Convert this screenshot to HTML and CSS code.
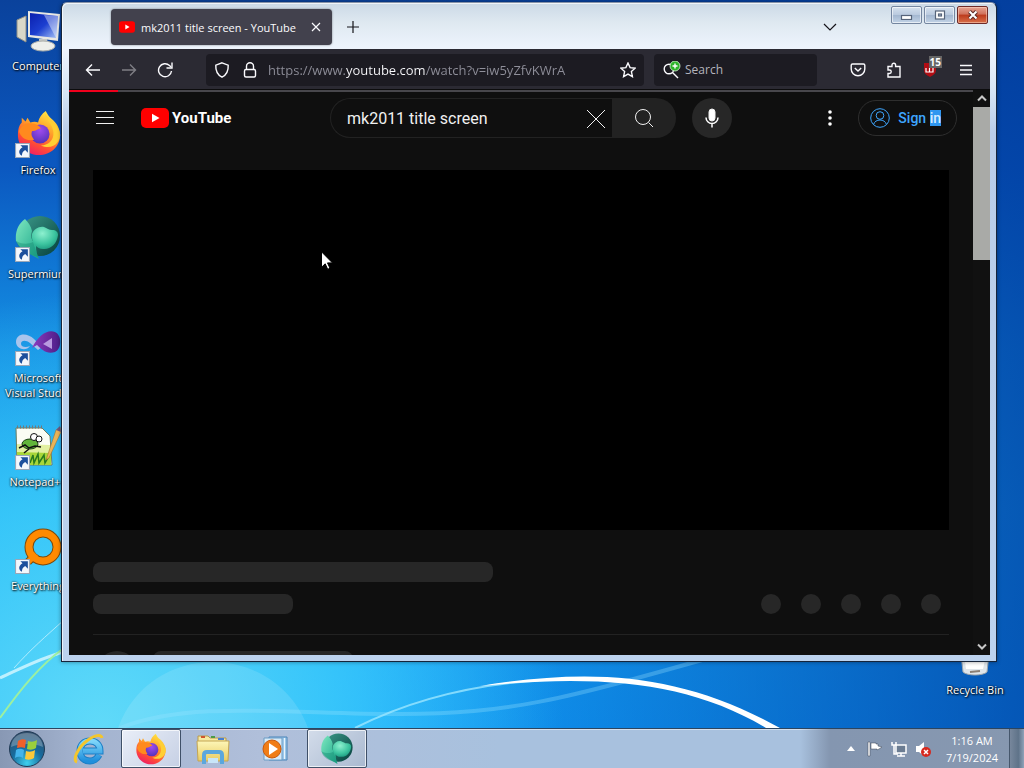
FILE: index.html
```
<!DOCTYPE html>
<html lang="en">
<head>
    <meta charset="UTF-8">
    <meta name="viewport" content="width=device-width, initial-scale=1.0">
    <title>mk2011 title screen - YouTube</title>
    <link rel="stylesheet" href="styles.css">
</head>
<body>
    <!-- Shared icons -->
    <svg class="defs" width="0" height="0" aria-hidden="true">
        <defs>
            <linearGradient id="ffBody" x1="0.8" y1="0" x2="0.3" y2="1">
                <stop offset="0" stop-color="#fff04a"/>
                <stop offset="0.4" stop-color="#ffa22a"/>
                <stop offset="0.75" stop-color="#ff4b36"/>
                <stop offset="1" stop-color="#ee1d67"/>
            </linearGradient>
            <radialGradient id="ffCore" cx="0.5" cy="0.3" r="0.8">
                <stop offset="0" stop-color="#a04bf0"/>
                <stop offset="1" stop-color="#4a2fb0"/>
            </radialGradient>
            <linearGradient id="smLight" x1="0" y1="0" x2="1" y2="1">
                <stop offset="0" stop-color="#7fe8c0"/>
                <stop offset="1" stop-color="#18a488"/>
            </linearGradient>
            <linearGradient id="smDark" x1="0" y1="0" x2="1" y2="1">
                <stop offset="0" stop-color="#3c9a8a"/>
                <stop offset="1" stop-color="#053f3c"/>
            </linearGradient>
            <radialGradient id="smBall" cx="0.4" cy="0.3" r="0.8">
                <stop offset="0" stop-color="#8df0cf"/>
                <stop offset="0.6" stop-color="#3cc49f"/>
                <stop offset="1" stop-color="#17917a"/>
            </radialGradient>
            <radialGradient id="orb" cx="0.5" cy="0.9" r="0.9">
                <stop offset="0" stop-color="#3fd0ee"/>
                <stop offset="0.5" stop-color="#176a9c"/>
                <stop offset="1" stop-color="#35506c"/>
            </radialGradient>
            <linearGradient id="screen" x1="0" y1="0" x2="1" y2="1">
                <stop offset="0" stop-color="#0a1fae"/>
                <stop offset="0.5" stop-color="#1c3fd0"/>
                <stop offset="1" stop-color="#a9c6f8"/>
            </linearGradient>
            <linearGradient id="folder" x1="0" y1="0" x2="0" y2="1">
                <stop offset="0" stop-color="#fdf6b8"/>
                <stop offset="1" stop-color="#e9cc62"/>
            </linearGradient>
            <linearGradient id="ie" x1="0" y1="0" x2="0" y2="1">
                <stop offset="0" stop-color="#7fd6fa"/>
                <stop offset="1" stop-color="#1f8fdc"/>
            </linearGradient>
            <linearGradient id="vs" x1="0" y1="0" x2="1" y2="0">
                <stop offset="0" stop-color="#8c3cc0"/>
                <stop offset="1" stop-color="#4b1d86"/>
            </linearGradient>
        </defs>
        <symbol id="firefox" viewBox="0 0 48 48">
            <path fill="url(#ffBody)" d="M31 1c2 3 3 6 6 8 5 4 9 10 9 17 0 12-10 21-22 21S2 38 2 26c0-6 1-10 4-13V8l4 4 2-4 3 5c3-1 6-1 8 0 1-5 4-9 8-12z"/>
            <circle cx="25" cy="25" r="10" fill="url(#ffCore)"/>
            <path fill="#ff8a1e" d="M3 22c3-7 8-9 13-8 4 0 8 2 10 5-4 1-5 3-9 3-2 3 0 7 2 9-8 2-14-2-16-9z"/>
            <path fill="#ffcf33" d="M30 3c1 8 8 10 9 20 1 9-6 14-13 14 13 6 21-5 20-12 0-9-13-14-16-22z"/>
        </symbol>
        <symbol id="supermium" viewBox="0 0 48 48">
            <circle cx="26" cy="22" r="20" fill="url(#smDark)"/>
            <path fill="url(#smLight)" d="M11 5C4 10 1 18 2 27c3 6 7 9 12 12l11 6c-3-6-3-11-3-15-6-4-5-10-4-13-1-5-4-9-7-12z"/>
            <path fill="#12886f" opacity="0.4" d="M2 27c7 4 13 3 17 1l5 15C12 40 4 36 2 27z"/>
            <path fill="url(#smBall)" d="M18 20c2-5 7-8 12-7 3 1 5 3 8 3 4 0 6 2 6 5-1 9-8 15-15 14-7 0-12-7-11-15z"/>
        </symbol>
        <symbol id="shortcut" viewBox="0 0 14 14">
            <path fill="#f4f7fc" stroke="#9aa7b8" d="M.5.5h13v13H.5z"/>
            <path fill="#1c4f9c" d="M5 2h7v7L9.500 6.500C7 8 6.500 9.500 6.500 12 3 10 3 6.500 7 4z"/>
        </symbol>
        <symbol id="yt" viewBox="0 0 28 20">
            <rect width="28" height="20" rx="5" fill="#f00"/>
            <path fill="#fff" d="M11 5.700v8.600l7.500-4.300z"/>
        </symbol>
    </svg>

    <main class="desktop">
        <svg class="wallpaper" viewBox="0 0 1024 728" preserveAspectRatio="none" fill="none" aria-hidden="true">
            <path d="M118 728C150 640 275 640 308 728z" fill="#fff" opacity="0.12"/>
            <path d="M120 728C190 700 290 714 400 714S560 700 720 655" stroke="#9be6ff" stroke-width="4" opacity="0.3"/>
            <path d="M355 728C420 695 500 678 590 679" stroke="#9be6ff" stroke-width="2" opacity="0.8"/>
            <path d="M480 686C590 668 680 672 780 728h-14C690 682 600 674 480 686z" fill="#fff"/>
            <path d="M0 678C20 669 40 658 64 652" stroke="#d8f7ff" stroke-width="3" opacity="0.8"/>
            <path d="M0 718C20 690 40 665 64 648" stroke="#9cf0a0" stroke-width="2"/>
            <path d="M14 668C30 650 46 636 64 620" stroke="#d8f7ff" stroke-width="1" opacity="0.7"/>
        </svg>

        <ul class="shortcuts">
            <li>
                <a href="#">
                    <svg class="icon" viewBox="0 0 48 48">
                        <path fill="#d9d8c8" stroke="#8f9088" d="M3 14l9-4v26l-9-5z"/>
                        <path fill="#e8e8e4" d="M14 5l32 3-2 27-30-4z"/>
                        <path fill="url(#screen)" d="M16 7l28 3-2 22-26-3z"/>
                        <path fill="#fff" opacity="0.4" d="M30 9l14 1-2 22z"/>
                        <path fill="#c6c9c6" d="M25 33h8l1 5h-9z"/>
                        <ellipse cx="29" cy="40" rx="12" ry="5" fill="#edefeb" stroke="#a9aca8"/>
                    </svg>
                    <span>Computer</span>
                </a>
            </li>
            <li>
                <a href="#">
                    <svg class="icon" viewBox="0 0 48 48">
                        <use href="#firefox" x="2" width="46" height="46"/>
                        <use href="#shortcut" x="1" y="33" width="15" height="15"/>
                    </svg>
                    <span>Firefox</span>
                </a>
            </li>
            <li>
                <a href="#">
                    <svg class="icon" viewBox="0 0 48 48">
                        <use href="#supermium" width="48" height="48"/>
                        <use href="#shortcut" x="1" y="33" width="15" height="15"/>
                    </svg>
                    <span>Supermium</span>
                </a>
            </li>
            <li>
                <a href="#">
                    <svg class="icon" viewBox="0 0 48 48">
                        <path fill="#a9c4ec" d="M2 24c0-9 11-10 18-3l8 8-4 3-8-7c-4-3-9-3-9 1 0 3 5 4 9 2-4 6-14 3-14-4z"/>
                        <path fill="url(#vs)" d="M18 30C24 18 33 11 41 14c7 3 7 17 0 20-8 3-14-3-18-7z"/>
                        <path fill="#b99ae0" d="M29 26l9-6v11z"/>
                        <use href="#shortcut" x="1" y="33" width="15" height="15"/>
                    </svg>
                    <span>Microsoft Visual Studio</span>
                </a>
            </li>
            <li>
                <a href="#">
                    <svg class="icon" viewBox="0 0 48 48">
                        <path fill="#fbfdf4" stroke="#6c7c60" d="M2 6h26l8 8 2 29H3z"/>
                        <path stroke="#777" stroke-dasharray="1 2" stroke-width="3" d="M3 5h26"/>
                        <path fill="#e2f0a0" d="M3 22l33 1v8H3z"/>
                        <path fill="#a8d639" d="M3 30l34 1v12H3z"/>
                        <path stroke="#27791e" stroke-width="1.500" fill="none" d="M16 41l3-8 1 8 4-9 1 9 5-8 1 8 4-7"/>
                        <ellipse cx="16" cy="22" rx="8" ry="5" fill="#62b53a" stroke="#173d11"/>
                        <circle cx="20" cy="15" r="3.500" fill="#fff" stroke="#111"/>
                        <circle cx="25" cy="17" r="3" fill="#fff" stroke="#111"/>
                        <path stroke="#111" stroke-width="1.500" fill="none" d="M5 26l6-3 4 3 6-2 6 1M10 31l5-4"/>
                        <path fill="#e9b458" stroke="#9a6a26" stroke-width="0.500" d="M32 38l10-30 4-3 1 5-12 26z"/>
                        <path fill="#6b5a86" d="M42 8l4-4 1 6z"/>
                        <use href="#shortcut" x="1" y="33" width="15" height="15"/>
                    </svg>
                    <span>Notepad++</span>
                </a>
            </li>
            <li>
                <a href="#">
                    <svg class="icon" viewBox="0 0 48 48">
                        <path stroke="#7c4a0c" stroke-width="8" d="M14 36l8-8"/>
                        <circle cx="29" cy="21" r="14" fill="none" stroke="#7c4a0c" stroke-width="9"/>
                        <path stroke="#ff8a00" stroke-width="6" d="M14 36l8-8"/>
                        <circle cx="29" cy="21" r="14" fill="none" stroke="#ff8a00" stroke-width="7"/>
                        <use href="#shortcut" x="1" y="33" width="15" height="15"/>
                    </svg>
                    <span>Everything</span>
                </a>
            </li>
        </ul>

        <a class="recycle" href="#">
            <svg class="icon" viewBox="0 0 48 48">
                <path fill="#dfe5ea" stroke="#9aa4ad" d="M8 6h32l-4 36c-4 4-20 4-24 0z"/>
                <path fill="#fff" d="M14 32l20-2-2 9H15z"/>
                <path stroke="#8b7f74" stroke-width="2" d="M19 42l10-1"/>
            </svg>
            <span>Recycle Bin</span>
        </a>

        <section class="window">
            <header class="titlebar">
                <div class="tab">
                    <svg width="16" height="12"><use href="#yt"/></svg>
                    <span class="tab-title">mk2011 title screen - YouTube</span>
                    <button class="tab-close" aria-label="Close tab">
                        <svg width="10" height="10" viewBox="0 0 10 10"><path d="M1 1l8 8M9 1L1 9"/></svg>
                    </button>
                </div>
                <button class="strip-btn" aria-label="New tab">
                    <svg width="14" height="14" viewBox="0 0 14 14"><path d="M7 1v12M1 7h12"/></svg>
                </button>
                <button class="strip-btn list-tabs" aria-label="List all tabs">
                    <svg width="14" height="14" viewBox="0 0 14 14"><path d="M1 4l6 6 6-6"/></svg>
                </button>
                <div class="controls">
                    <button aria-label="Minimize">
                        <svg width="14" height="10" viewBox="0 0 14 10"><rect x="1.500" y="5.500" width="10" height="4" fill="#fff" stroke="#56647a"/></svg>
                    </button>
                    <button aria-label="Maximize">
                        <svg width="14" height="10" viewBox="0 0 14 10"><rect x="2.500" y="1" width="9" height="8" fill="#fff" stroke="#56647a"/><rect x="5.500" y="4" width="3" height="2" fill="#a9bbd0" stroke="#56647a"/></svg>
                    </button>
                    <button class="close" aria-label="Close">
                        <svg width="14" height="10" viewBox="0 0 14 10"><path d="M3.500 1.500l7 7M10.500 1.500l-7 7" stroke="#5b2a26" stroke-width="4"/><path d="M3.500 1.500l7 7M10.500 1.500l-7 7" stroke="#fff" stroke-width="2"/></svg>
                    </button>
                </div>
            </header>

            <div class="toolbar">
                <div class="nav-group">
                    <button aria-label="Back"><svg viewBox="0 0 16 16"><path d="M15 8H2M7 2.500L1.500 8 7 13.500"/></svg></button>
                    <button disabled aria-label="Forward"><svg viewBox="0 0 16 16"><path d="M1 8h13M9 2.500L14.500 8 9 13.500"/></svg></button>
                    <button aria-label="Reload"><svg viewBox="0 0 16 16"><path d="M14.500 9A6.500 6.500 0 1 1 12.500 3.500L14 5"/><path d="M15 .5V6H9.500"/></svg></button>
                </div>
                <div class="urlbar">
                    <svg viewBox="0 0 16 16"><path d="M8 .8l6.200 2.400c.3 5.500-1.700 9.600-6.200 12-4.500-2.400-6.500-6.500-6.200-12z"/></svg>
                    <svg viewBox="0 0 16 16"><rect x="2.500" y="7.500" width="11" height="7.500" rx="1.500"/><path d="M4.500 7.500V4.300a3.500 3.500 0 0 1 7 0v3.200"/></svg>
                    <input class="url" type="text" aria-label="Address" value="https://www.youtube.com/watch?v=iw5yZfvKWrA">
                    <button aria-label="Bookmark this page"><svg viewBox="0 0 16 16"><path d="M8 1l2.100 4.600 5 .6-3.700 3.400 1 5L8 12.100l-4.400 2.500 1-5L.9 6.200l5-.6z"/></svg></button>
                </div>
                <div class="searchbar">
                    <svg viewBox="0 0 18 18"><circle cx="6" cy="8" r="4.800"/><path d="M9.500 11.500L15 17"/><circle cx="12" cy="5" r="5" fill="#2fb52a" stroke="#d9f5d6" stroke-width="0.800"/><path d="M12 2.500v5M9.500 5h5" stroke="#fff"/></svg>
                    <input type="text" placeholder="Search" aria-label="Search">
                </div>
                <div class="nav-group">
                    <button aria-label="Pocket"><svg viewBox="0 0 16 16"><path d="M2.500 2h11c.8 0 1.300.5 1.300 1.300V7a6.800 6.800 0 0 1-13.600 0V3.300C1.200 2.500 1.700 2 2.500 2z"/><path d="M4.800 6L8 9l3.200-3"/></svg></button>
                    <button aria-label="Extensions"><svg viewBox="0 0 16 16"><path d="M2 15v-3.500h1.500a1.700 1.700 0 0 0 0-3.500H2V4.500h4V3a1.800 1.800 0 0 1 3.600 0v1.500H14V15z"/></svg></button>
                    <button class="blocker" aria-label="Ad blocker, 15 blocked">
                        <svg viewBox="0 0 16 16"><path fill="#b00d14" stroke="none" d="M2 1h12v7c0 4-3 5-6 7-3-2-6-3-6-7z"/><path stroke="#fff" stroke-width="1.200" d="M4 6v4h7V6M7.500 6v4"/></svg>
                        <span class="badge">15</span>
                    </button>
                    <button aria-label="Menu"><svg viewBox="0 0 16 16"><path d="M2 3.500h12M2 8h12M2 12.500h12"/></svg></button>
                </div>
            </div>

            <div class="viewport">
                <div class="page">
                    <div class="progress"><div class="progress-bar"></div></div>
                    <header class="masthead">
                        <div class="start">
                            <button class="guide" aria-label="Guide"><svg width="20" height="16" viewBox="0 0 20 16"><path d="M1 1.500h18M1 7.500h18M1 13.500h18"/></svg></button>
                            <a class="logo" href="#"><svg width="28" height="20"><use href="#yt"/></svg><span>YouTube</span></a>
                        </div>
                        <form class="search">
                            <div class="search-box">
                                <input type="text" value="mk2011 title screen" aria-label="Search YouTube">
                                <button type="button" aria-label="Clear"><svg width="20" height="20" viewBox="0 0 20 20"><path d="M1 1l18 18M19 1L1 19"/></svg></button>
                            </div>
                            <button class="search-btn" type="submit" aria-label="Search"><svg width="20" height="20" viewBox="0 0 20 20"><circle cx="9" cy="9" r="7.500"/><path d="M14.500 14.500L19 19"/></svg></button>
                            <button class="mic" type="button" aria-label="Search with your voice"><svg width="24" height="24" viewBox="0 0 24 24"><rect x="9" y="3" width="6" height="12" rx="3" fill="#fff"/><path d="M6 11.500a6 6 0 0 0 12 0M12 18v3.500" fill="none" stroke="#fff" stroke-width="1.500"/></svg></button>
                        </form>
                        <div class="end">
                            <button class="settings" aria-label="Settings"><svg width="4" height="16" viewBox="0 0 4 16"><circle cx="2" cy="2" r="1.800"/><circle cx="2" cy="8" r="1.800"/><circle cx="2" cy="14" r="1.800"/></svg></button>
                            <a class="sign-in" href="#">
                                <svg width="20" height="20" viewBox="0 0 20 20"><circle cx="10" cy="10" r="9.300"/><circle cx="10" cy="7.500" r="3.800"/><path d="M3.500 16.500c1-3 3.500-4.500 6.500-4.500s5.500 1.500 6.500 4.500"/></svg>
                                <span>Sign <mark>in</mark></span>
                            </a>
                        </div>
                    </header>
                    <div class="watch">
                        <div class="player"></div>
                        <div class="bone title-bone"></div>
                        <div class="meta">
                            <div class="bone"></div>
                            <div class="dots"><i></i><i></i><i></i><i></i><i></i></div>
                        </div>
                        <div class="owner">
                            <div class="avatar"></div>
                            <div class="bone"></div>
                        </div>
                    </div>
                </div>
                <div class="scrollbar">
                    <svg viewBox="0 0 10 6"><path d="M1 5l4-4 4 4"/></svg>
                    <div class="thumb"></div>
                    <svg viewBox="0 0 10 6"><path d="M1 1l4 4 4-4"/></svg>
                </div>
            </div>
        </section>

        <svg class="cursor" width="12" height="19" viewBox="0 0 12 19"><path d="M.5.8v15.500l3.700-3.500 2.500 5.500 2.300-1-2.500-5.400h5z" fill="#fff" stroke="#000"/></svg>
    </main>

    <footer class="taskbar">
        <button class="start-btn" aria-label="Start">
            <svg width="38" height="38" viewBox="0 0 38 38">
                <circle cx="19" cy="19" r="17.500" fill="url(#orb)" stroke="#213a55"/>
                <path fill="#fff" opacity="0.25" d="M3 17C4 7 11 3 19 3s15 4 16 14c-8-4-24-4-32 0z"/>
                <path fill="#f0602a" d="M10 11c3-2 6-2 8-1l-1 8c-3-1-5-1-8 0z"/>
                <path fill="#9bcf3c" d="M20 11c3 1 6 1 9-1l-1 8c-3 2-6 2-9 1z"/>
                <path fill="#44b4ec" d="M8 20c3-2 6-1 8 0l-1 8c-2-1-5-2-8 0z"/>
                <path fill="#fcc93a" d="M18 21c3 1 6 1 9-1l-1 8c-3 2-6 2-9 1z"/>
            </svg>
        </button>
        <button class="task" aria-label="Internet Explorer">
            <svg width="32" height="32" viewBox="0 0 32 32">
                <path fill="none" stroke="#1c7fc6" stroke-width="7" d="M26 22c-2 4-6 6-9 6-6 0-10-4-10-10S11 8 17 8s10 4 10 10H10"/>
                <path fill="none" stroke="url(#ie)" stroke-width="5" d="M26 22c-2 4-6 6-9 6-6 0-10-4-10-10S11 8 17 8s10 4 10 10H10"/>
                <path fill="none" stroke="#f4c62c" stroke-width="3" d="M4 29C-1 27 5 14 15 7c7-5 13-6 14-2"/>
            </svg>
        </button>
        <button class="task open" aria-label="Firefox"><svg width="32" height="32"><use href="#firefox"/></svg></button>
        <button class="task" aria-label="Windows Explorer">
            <svg width="34" height="32" viewBox="0 0 34 32">
                <path fill="#f6e9a0" stroke="#b99a4c" d="M2 3h10l2 2h16v6H2z"/>
                <path stroke="#d0562c" stroke-width="2" d="M5 4h4"/>
                <path stroke="#4d9a46" stroke-width="2" d="M15 4h4"/>
                <path stroke="#4a7fd0" stroke-width="2" d="M22 6h6"/>
                <path fill="url(#folder)" stroke="#c4a552" d="M1 8h32l-1 20H2z"/>
                <path fill="none" stroke="#5ba7dd" stroke-width="4" d="M8 31v-9c0-2 1-3 3-3h12c2 0 3 1 3 3v9"/>
                <path fill="#c8e6f8" d="M12 25h10v5H12z"/>
            </svg>
        </button>
        <button class="task" aria-label="Windows Media Player">
            <svg width="28" height="28" viewBox="0 0 28 28">
                <path fill="#9fc9ea" stroke="#4b84b8" d="M8 2h18v23H8z"/>
                <path stroke="#e8f4fc" d="M23.500 3v21"/>
                <path fill="#d8ebf8" stroke="#6d9dc6" d="M3 3h18v22H3z"/>
                <circle cx="11" cy="14" r="9" fill="#f07d16" stroke="#c9580a"/>
                <path fill="#fff" d="M8 8l9 6-9 6z"/>
            </svg>
        </button>
        <button class="task open" aria-label="Supermium"><svg width="34" height="34"><use href="#supermium"/></svg></button>

        <div class="tray">
            <button aria-label="Show hidden icons"><svg width="8" height="5" viewBox="0 0 8 5"><path fill="#fff" d="M4 0l4 5H0z"/></svg></button>
            <button aria-label="Action Center"><svg width="16" height="16" viewBox="0 0 16 16"><path fill="#fff" stroke="#3c4654" stroke-width="0.500" d="M1 1h2v14H1zM4 2h5v1h2v2l4 1-3 2-2 1V8H4z"/></svg></button>
            <button aria-label="Network"><svg width="16" height="16" viewBox="0 0 16 16"><path fill="#6b7c92" stroke="#fff" stroke-width="1.500" d="M5 4h10v8H5z"/><path fill="none" stroke="#fff" stroke-width="1.500" d="M1 1v3h4V1M3 4v9h4M6 15h8M10 12v3"/></svg></button>
            <button aria-label="Volume, muted"><svg width="16" height="16" viewBox="0 0 16 16"><path fill="#fff" d="M1 5h3l5-4v14l-5-4H1z"/><circle cx="11" cy="11" r="5" fill="#d6281e"/><path stroke="#fff" stroke-width="1.500" d="M9 9l4 4M13 9l-4 4"/></svg></button>
            <div class="clock"><time>1:16 AM</time><time>7/19/2024</time></div>
            <button class="show-desktop" aria-label="Show desktop"></button>
        </div>
    </footer>
</body>
</html>
```
FILE: styles.css
```
:root {
    --ui-font: 'Open Sans', 'Noto Sans', sans-serif;
    --yt-font: Roboto, Arial, sans-serif;
    --chrome: #2b2a33;
    --field: #1c1b22;
    --yt-bg: #0f0f0f;
    --bone: #272727;
}

* {
    margin: 0;
    padding: 0;
    box-sizing: border-box;
}

body {
    display: flex;
    flex-direction: column;
    height: 100vh;
    overflow: hidden;
    font-family: var(--ui-font);
    font-size: 11px;
    line-height: 15px;
}

button, input {
    font: inherit;
    color: inherit;
    background: none;
    border: none;
    outline: none;
}

button {
    display: flex;
    align-items: center;
    justify-content: center;
    flex-shrink: 0;
}

a {
    color: inherit;
    text-decoration: none;
}

svg {
    flex-shrink: 0;
}

.defs {
    position: absolute;
}

/* Desktop */
.desktop {
    flex: 1;
    position: relative;
    overflow: hidden;
    background:
        radial-gradient(ellipse 45% 60% at 10% 100%, rgba(110, 228, 248, 0.85), rgba(70, 212, 250, 0.7) 50%, rgba(20, 160, 255, 0) 100%),
        linear-gradient(90deg, rgba(0, 70, 190, 0) 35%, rgba(0, 62, 160, 0.75) 100%),
        linear-gradient(#0a429c 0%, #0b58c0 23%, #1490e4 48%, #18a8f4 70%, #12a0fc 100%);
}

.wallpaper {
    position: absolute;
    inset: 0;
    width: 100%;
    height: 100%;
}

.shortcuts {
    position: absolute;
    top: 6px;
    left: 0;
    width: 76px;
    list-style: none;
}

.shortcuts li {
    height: 104px;
}

.shortcuts a, .recycle {
    display: flex;
    flex-direction: column;
    align-items: center;
    gap: 4px;
    color: #fff;
    text-align: center;
    text-shadow: 1px 1px 2px #000, 0 0 2px #000;
}

.icon {
    width: 48px;
    height: 48px;
}

.recycle {
    position: absolute;
    right: 11px;
    bottom: 31px;
    width: 76px;
    white-space: nowrap;
}

.cursor {
    position: absolute;
    left: 321px;
    top: 251px;
}

/* Browser window */
.window {
    position: absolute;
    inset: 2px 27px 66px 61px;
    display: flex;
    flex-direction: column;
    padding: 0 6px 6px 7px;
    border: 1px solid #16243a;
    border-top-color: #8793a8;
    border-radius: 6px 6px 0 0;
    background: linear-gradient(#cbd9e6 0, #dfe9f1 20px, #eef4fd 46px, #d6e4f4 90px, #b9cde9 130px, #bcd2ee 100%);
    box-shadow: inset 1px 1px 0 rgba(255, 255, 255, 0.7), 0 0 4px rgba(0, 0, 0, 0.4);
}

.titlebar {
    display: flex;
    align-items: center;
    height: 46px;
    padding-left: 42px;
    color: #15141a;
    flex-shrink: 0;
}

.titlebar svg {
    stroke: currentColor;
    stroke-width: 1.2;
    fill: none;
}

.tab {
    display: flex;
    align-items: center;
    width: 221px;
    height: 36px;
    margin-top: 2px;
    padding: 0 8px;
    gap: 6px;
    border-radius: 4px;
    background: #42414d;
    color: #fbfbfe;
    box-shadow: 0 0 2px rgba(0, 0, 0, 0.5);
}

.tab > svg {
    stroke: none;
}

.tab-title {
    flex: 1;
    white-space: nowrap;
}

.tab-close {
    width: 16px;
    height: 16px;
}

.strip-btn {
    width: 32px;
    height: 32px;
    margin: 2px 0 0 5px;
}

.list-tabs {
    margin-left: auto;
}

.controls {
    display: flex;
    gap: 2px;
    align-self: flex-start;
    margin: 3px 2px 0 45px;
}

.controls button {
    width: 31px;
    height: 18px;
    border: 1px solid #7486a0;
    border-radius: 2px;
    background: linear-gradient(#d5e1ee, #b9c9de 50%, #a3b7d0 51%, #c2d3e6);
    box-shadow: inset 0 0 0 1px rgba(255, 255, 255, 0.6);
}

.controls .close {
    border-color: #6e2a28;
    background: linear-gradient(#e6a493, #d0705a 45%, #bc3a1c 50%, #d8704a);
    box-shadow: inset 0 0 0 1px rgba(255, 220, 200, 0.5);
}

.toolbar {
    display: flex;
    align-items: center;
    height: 41px;
    padding: 1px 8px 0;
    background: var(--chrome);
    color: #fbfbfe;
    flex-shrink: 0;
    border-bottom: 1px solid #0c0c0d;
}

.toolbar svg {
    width: 16px;
    height: 16px;
    fill: none;
    stroke: currentColor;
    stroke-width: 1.4;
}

.nav-group {
    display: flex;
    gap: 4px;
}

.nav-group button {
    width: 32px;
    height: 32px;
}

.nav-group button:disabled {
    opacity: 0.4;
}

.urlbar, .searchbar {
    display: flex;
    align-items: center;
    height: 32px;
    border-radius: 4px;
    background: var(--field);
}

.urlbar {
    flex: 1;
    min-width: 0;
    margin-left: 25px;
    padding: 0 8px;
    gap: 12px;
}

.urlbar button {
    width: 16px;
}

/* The host name is lighter than the rest of the address */
.url {
    flex: 1;
    min-width: 0;
    margin-left: -2px;
    font-size: 13px;
    line-height: 20px;
    background: linear-gradient(90deg, #8f8f9a 77px, #fbfbfe 77px, #fbfbfe 157px, #8f8f9a 157px);
    -webkit-background-clip: text;
    background-clip: text;
    -webkit-text-fill-color: transparent;
}

.searchbar {
    width: 163px;
    margin: 0 25px 0 10px;
    padding: 0 9px;
    gap: 4px;
    font-size: 12px;
}

.searchbar svg {
    width: 18px;
    height: 18px;
}

.searchbar input {
    flex: 1;
    min-width: 0;
}

.searchbar input::placeholder {
    color: #b4b4bc;
    opacity: 1;
}

.blocker {
    position: relative;
}

.badge {
    position: absolute;
    top: 2px;
    right: 4px;
    padding: 0 1px;
    background: #666;
    color: #fff;
    font-size: 10px;
    font-weight: 700;
    line-height: 12px;
}

/* YouTube page */
.viewport {
    flex: 1;
    display: flex;
    min-height: 0;
    background: var(--yt-bg);
    color: #f1f1f1;
    font-family: var(--yt-font);
}

.page {
    flex: 1;
    min-width: 0;
    overflow: hidden;
    position: relative;
}

.progress {
    position: absolute;
    top: 0;
    left: 0;
    right: 0;
    height: 2px;
    background: #48474c;
}

.progress-bar {
    width: 49px;
    height: 2px;
    background: #f0001c;
}

.masthead {
    display: flex;
    align-items: center;
    height: 56px;
    padding: 0 16px;
}

.start {
    display: flex;
    align-items: center;
    width: 245px;
    gap: 16px;
}

.guide {
    width: 40px;
    height: 40px;
}

.guide svg, .search svg, .sign-in svg {
    fill: none;
    stroke: currentColor;
    stroke-width: 1;
}

.logo {
    display: flex;
    align-items: center;
    gap: 3px;
    color: #fff;
    font-size: 15px;
    font-weight: 700;
    line-height: 20px;
}

.search {
    flex: 1;
    display: flex;
    min-width: 0;
}

.search-box {
    flex: 1;
    display: flex;
    min-width: 0;
    height: 40px;
    padding: 1px 6px 0 16px;
    border: 1px solid #222;
    border-right: none;
    border-radius: 20px 0 0 20px;
    font-size: 16px;
    line-height: 24px;
}

.search-box input {
    flex: 1;
    min-width: 0;
}

.search-box button {
    width: 20px;
}

.search-btn {
    width: 64px;
    height: 40px;
    border-radius: 0 20px 20px 0;
    background: #222;
}

.mic {
    width: 40px;
    height: 40px;
    margin-left: 16px;
    border-radius: 50%;
    background: var(--bone);
}

.end {
    display: flex;
    align-items: center;
    justify-content: flex-end;
    width: 225px;
    gap: 8px;
}

.settings {
    width: 40px;
    height: 40px;
}

.settings svg {
    fill: #fff;
}

.sign-in {
    display: flex;
    align-items: center;
    height: 36px;
    padding: 0 15px 0 11px;
    gap: 8px;
    border: 1px solid #2e2e2e;
    border-radius: 18px;
    color: #3ea6ff;
    font-size: 14px;
    font-weight: 500;
    white-space: nowrap;
}

.sign-in mark {
    background: #2f97f0;
    color: #d5ecff;
}

.watch {
    padding: 24px 24px 0;
}

.player {
    aspect-ratio: 107 / 45;
    background: #000;
}

.bone {
    width: 200px;
    height: 20px;
    border-radius: 8px;
    background: var(--bone);
}

.title-bone {
    width: 400px;
    margin: 32px 0 12px;
}

.meta {
    display: flex;
    justify-content: space-between;
    padding: 0 8px 20px 0;
    border-bottom: 1px solid #222;
}

.dots {
    display: flex;
    gap: 20px;
}

.dots i {
    width: 20px;
    height: 20px;
    border-radius: 50%;
    background: var(--bone);
}

.owner {
    display: flex;
    gap: 16px;
    padding: 16px 0 0 4px;
}

.avatar {
    width: 40px;
    height: 40px;
    border-radius: 50%;
    background: var(--bone);
}

.scrollbar {
    display: flex;
    flex-direction: column;
    width: 17px;
    background: #111;
}

.scrollbar svg {
    width: 10px;
    height: 17px;
    margin: 0 auto;
    fill: none;
    stroke: #c8c8c8;
    stroke-width: 2;
}

.thumb {
    height: 153px;
    margin-bottom: auto;
    background: #a9aaa7;
}

/* Taskbar */
.taskbar {
    display: flex;
    height: 40px;
    border-top: 1px solid #2c4560;
    background: linear-gradient(90deg, #8898b4 0, #a3b3cf 80px, #b0bfda 260px, #a8c1de 500px, #a8c1de 100%);
    box-shadow: inset 0 1px 0 rgba(255, 255, 255, 0.5);
}

.start-btn {
    width: 54px;
    margin-right: 5px;
}

.task {
    width: 60px;
    margin-right: 2px;
    border: 1px solid transparent;
    border-radius: 2px;
}

.task.open {
    border-color: #3f5068;
    background: linear-gradient(135deg, #e9eef8, #c6d0e4);
    box-shadow: inset 0 0 0 1px rgba(255, 255, 255, 0.7);
}

.task.open:last-of-type {
    background: linear-gradient(135deg, #d3dcea, #a9b9d0);
}

.tray {
    display: flex;
    margin-left: auto;
    padding-left: 39px;
    background: linear-gradient(90deg, rgba(125, 142, 165, 0) 0, #8496b0 30px, #8798b0 100%);
    color: #fff;
}

.tray button {
    width: 24px;
}

.clock {
    display: flex;
    flex-direction: column;
    justify-content: center;
    width: 74px;
    line-height: 17px;
    text-align: center;
}

.tray .show-desktop {
    width: 15px;
    border-left: 1px solid #46576c;
    background: linear-gradient(90deg, #77879c, #5f7389 60%, #8fa2b8);
}
```
